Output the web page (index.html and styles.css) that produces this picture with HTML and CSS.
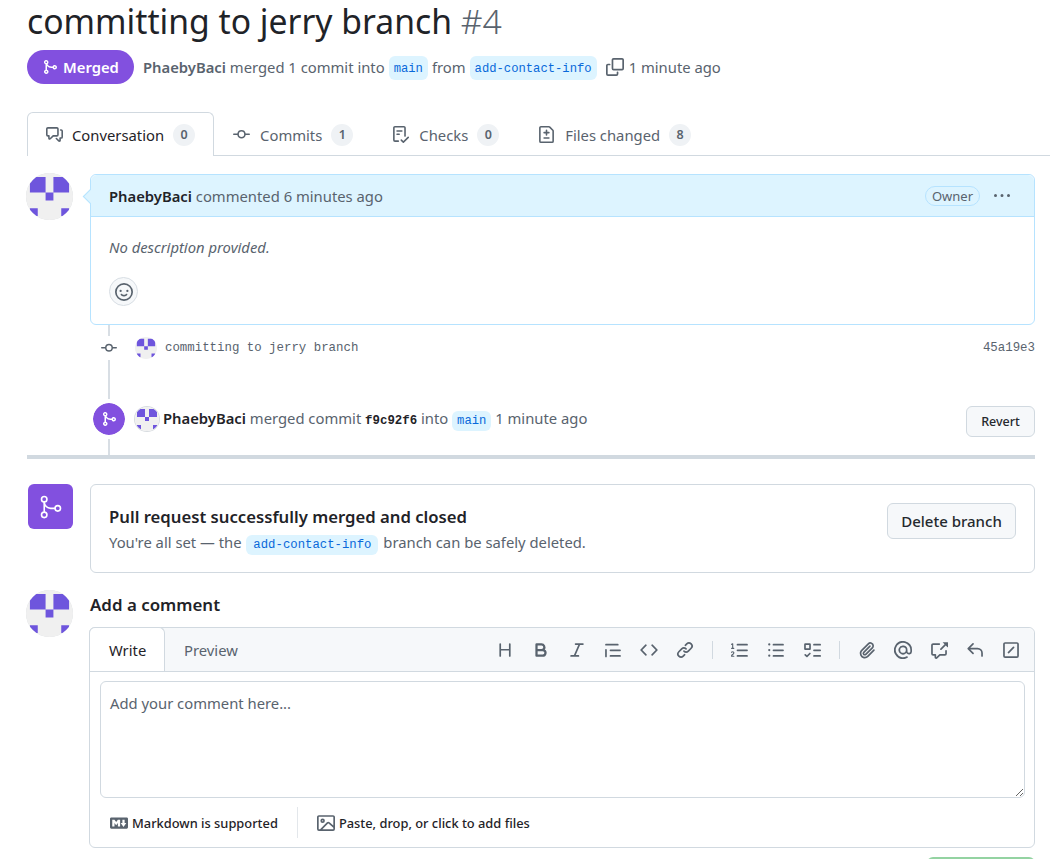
FILE: index.html
```html
<!DOCTYPE html>
<html lang="en">
<head>
    <meta charset="UTF-8">
    <meta name="viewport" content="width=device-width, initial-scale=1.0">
    <title>committing to jerry branch #4</title>
    <link rel="stylesheet" href="styles.css">
</head>
<body>
    <svg class="defs" width="0" height="0" aria-hidden="true">
        <symbol id="i-merge" viewBox="0 0 16 16"><path d="M5.45 5.154A4.25 4.25 0 0 0 9.25 7.5h1.378a2.251 2.251 0 1 1 0 1.5H9.25A5.734 5.734 0 0 1 5 7.123v3.505a2.25 2.25 0 1 1-1.5 0V5.372a2.25 2.25 0 1 1 1.95-.218ZM4.25 13.5a.75.75 0 1 0 0-1.5.75.75 0 0 0 0 1.5Zm8.5-4.5a.75.75 0 1 0 0-1.5.75.75 0 0 0 0 1.5ZM5 3.25a.75.75 0 1 0 0 .005V3.25Z"/></symbol>
        <symbol id="i-commit" viewBox="0 0 16 16"><path d="M11.93 8.5a4.002 4.002 0 0 1-7.86 0H.75a.75.75 0 0 1 0-1.5h3.32a4.002 4.002 0 0 1 7.86 0h3.32a.75.75 0 0 1 0 1.5Zm-1.43-.75a2.5 2.5 0 1 0-5 0 2.5 2.5 0 0 0 5 0Z"/></symbol>
        <symbol id="avatar" viewBox="0 0 420 420">
            <rect width="420" height="420" fill="#f0f0f0"/>
            <path fill="#6e55dd" d="M35 35h140v140H35zM245 35h140v140H245zM175 175h70v70h-70zM35 315h70v70H35zM315 315h70v70h-70z"/>
        </symbol>
    </svg>

    <main class="page">
        <h1 class="title">committing to jerry branch <span class="num">#4</span></h1>

        <div class="state-row">
            <span class="state-badge"><svg class="ico"><use href="#i-merge"/></svg>Merged</span>
            <span class="meta"><b>PhaebyBaci</b> merged 1 commit into</span>
            <code class="ref">main</code>
            <span class="meta">from</span>
            <code class="ref">add-contact-info</code>
            <svg class="ico copy" viewBox="0 0 16 16"><path d="M0 6.75C0 5.784.784 5 1.75 5h1.5a.75.75 0 0 1 0 1.5h-1.5a.25.25 0 0 0-.25.25v7.5c0 .138.112.25.25.25h7.5a.25.25 0 0 0 .25-.25v-1.5a.75.75 0 0 1 1.5 0v1.5A1.75 1.75 0 0 1 9.25 16h-7.5A1.75 1.75 0 0 1 0 14.25Z"/><path d="M5 1.75C5 .784 5.784 0 6.75 0h7.5C15.216 0 16 .784 16 1.75v7.5A1.75 1.75 0 0 1 14.25 11h-7.5A1.75 1.75 0 0 1 5 9.25Zm1.75-.25a.25.25 0 0 0-.25.25v7.5c0 .138.112.25.25.25h7.5a.25.25 0 0 0 .25-.25v-7.5a.25.25 0 0 0-.25-.25Z"/></svg>
            <span class="meta time">1 minute ago</span>
        </div>

        <nav class="tabs">
            <a class="tab active">
                <svg class="ico" viewBox="0 0 16 16"><path d="M1.75 1h8.5c.966 0 1.75.784 1.75 1.75v5.5A1.75 1.75 0 0 1 10.25 10H7.061l-2.574 2.573A1.458 1.458 0 0 1 2 11.543V10h-.25A1.75 1.75 0 0 1 0 8.25v-5.5C0 1.784.784 1 1.75 1ZM1.5 2.75v5.5c0 .138.112.25.25.25h1a.75.75 0 0 1 .75.75v2.19l2.72-2.72a.749.749 0 0 1 .53-.22h3.5a.25.25 0 0 0 .25-.25v-5.5a.25.25 0 0 0-.25-.25h-8.5a.25.25 0 0 0-.25.25Zm13 2a.25.25 0 0 0-.25-.25h-.5a.75.75 0 0 1 0-1.5h.5c.966 0 1.75.784 1.75 1.75v5.5A1.75 1.75 0 0 1 14.25 12H14v1.543a1.458 1.458 0 0 1-2.487 1.03L9.22 12.28a.749.749 0 0 1 .326-1.275.749.749 0 0 1 .734.215l2.22 2.22v-2.19a.75.75 0 0 1 .75-.75h1a.25.25 0 0 0 .25-.25Z"/></svg>
                Conversation <span class="count">0</span>
            </a>
            <a class="tab"><svg class="ico"><use href="#i-commit"/></svg>Commits <span class="count">1</span></a>
            <a class="tab">
                <svg class="ico" viewBox="0 0 16 16"><path d="M2.5 1.75v11.5c0 .138.112.25.25.25h3.17a.75.75 0 0 1 0 1.5H2.75A1.75 1.75 0 0 1 1 13.25V1.75C1 .784 1.784 0 2.75 0h8.5C12.216 0 13 .784 13 1.75v7.736a.75.75 0 0 1-1.5 0V1.75a.25.25 0 0 0-.25-.25h-8.5a.25.25 0 0 0-.25.25Zm13.274 9.537v-.001l-4.557 4.45a.75.75 0 0 1-1.055-.008l-1.943-1.95a.75.75 0 0 1 1.062-1.058l1.419 1.425 4.026-3.932a.75.75 0 1 1 1.048 1.074ZM4.75 4h4.5a.75.75 0 0 1 0 1.5h-4.5a.75.75 0 0 1 0-1.5ZM4 7.75A.75.75 0 0 1 4.75 7h2a.75.75 0 0 1 0 1.5h-2A.75.75 0 0 1 4 7.75Z"/></svg>
                Checks <span class="count">0</span>
            </a>
            <a class="tab">
                <svg class="ico" viewBox="0 0 16 16"><path d="M1 1.75C1 .784 1.784 0 2.75 0h7.586c.464 0 .909.184 1.237.513l2.914 2.914c.329.328.513.773.513 1.237v9.586A1.75 1.75 0 0 1 13.25 16H2.75A1.75 1.75 0 0 1 1 14.25Zm1.75-.25a.25.25 0 0 0-.25.25v12.5c0 .138.112.25.25.25h10.5a.25.25 0 0 0 .25-.25V4.664a.25.25 0 0 0-.073-.177l-2.914-2.914a.25.25 0 0 0-.177-.073ZM8 3.25a.75.75 0 0 1 .75.75v1.5h1.5a.75.75 0 0 1 0 1.5h-1.5v1.5a.75.75 0 0 1-1.5 0V7h-1.5a.75.75 0 0 1 0-1.5h1.5V4A.75.75 0 0 1 8 3.25Zm-3 8a.75.75 0 0 1 .75-.75h4.5a.75.75 0 0 1 0 1.5h-4.5a.75.75 0 0 1-.75-.75Z"/></svg>
                Files changed <span class="count">8</span>
            </a>
        </nav>

        <section class="comment-row">
            <svg class="avatar"><use href="#avatar"/></svg>
            <div class="comment-card">
                <div class="comment-head">
                    <span><b>PhaebyBaci</b> commented 6 minutes ago</span>
                    <span class="owner">Owner</span>
                    <svg class="ico kebab" viewBox="0 0 16 16"><path d="M8 9a1.5 1.5 0 1 0 0-3 1.5 1.5 0 0 0 0 3ZM1.5 9a1.5 1.5 0 1 0 0-3 1.5 1.5 0 0 0 0 3Zm13 0a1.5 1.5 0 1 0 0-3 1.5 1.5 0 0 0 0 3Z"/></svg>
                </div>
                <div class="comment-body">
                    <em>No description provided.</em>
                    <button class="react"><svg class="ico" viewBox="0 0 16 16"><path d="M8 0a8 8 0 1 1 0 16A8 8 0 0 1 8 0ZM1.5 8a6.5 6.5 0 1 0 13 0 6.5 6.5 0 0 0-13 0Zm3.82 1.636a.75.75 0 0 1 1.038.175l.007.009c.103.118.22.222.35.31.264.178.683.37 1.285.37.602 0 1.02-.192 1.285-.371.13-.088.247-.192.35-.31l.007-.008a.75.75 0 0 1 1.222.87l-.022-.015c.02.013.021.015.021.015v.001l-.001.002-.002.003-.005.007-.014.019a2.066 2.066 0 0 1-.184.213c-.16.166-.338.316-.53.445-.63.418-1.37.638-2.127.629-.946 0-1.652-.308-2.126-.63a3.331 3.331 0 0 1-.715-.657l-.014-.02-.005-.006-.002-.003v-.002h-.001l.613-.432-.614.43a.75.75 0 0 1 .183-1.044ZM12 7a1 1 0 1 1-2 0 1 1 0 0 1 2 0ZM5 8a1 1 0 1 1 0-2 1 1 0 0 1 0 2Zm5.25 2.25.592.416a97.71 97.71 0 0 0-.592-.416Z"/></svg></button>
                </div>
            </div>
        </section>

        <section class="timeline">
            <div class="commit-row">
                <span class="node"><svg class="ico"><use href="#i-commit"/></svg></span>
                <svg class="avatar small"><use href="#avatar"/></svg>
                <span class="commit-msg">committing to jerry branch</span>
                <span class="sha">45a19e3</span>
            </div>
            <div class="merged-row">
                <span class="merge-dot"><svg class="ico"><use href="#i-merge"/></svg></span>
                <svg class="avatar small bordered"><use href="#avatar"/></svg>
                <span class="merged-text"><b>PhaebyBaci</b> merged commit <code class="hash">f9c92f6</code> into <code class="ref small-ref">main</code> 1 minute ago</span>
                <button class="btn revert">Revert</button>
            </div>
        </section>
        <div class="thick-rule"></div>

        <section class="merge-row">
            <span class="merge-square">
                <svg class="ico" viewBox="0 0 24 24"><path d="M15 13.25a3.25 3.25 0 1 1 6.5 0 3.25 3.25 0 0 1-6.5 0Zm-12.5 6a3.25 3.25 0 1 1 6.5 0 3.25 3.25 0 0 1-6.5 0Zm0-14.5a3.25 3.25 0 1 1 6.5 0 3.25 3.25 0 0 1-6.5 0ZM5.75 6.5a1.75 1.75 0 1 0-.001-3.501A1.75 1.75 0 0 0 5.75 6.5Zm0 14.5a1.75 1.75 0 1 0-.001-3.501A1.75 1.75 0 0 0 5.75 21Zm12.5-6a1.75 1.75 0 1 0-.001-3.501A1.75 1.75 0 0 0 18.25 15Z"/><path d="M6.5 7.25c0 2.9 2.35 5.25 5.25 5.25h4.5V14h-4.5A6.75 6.75 0 0 1 5 7.25Z"/><path d="M5.75 16.75A.75.75 0 0 1 5 16V8a.75.75 0 0 1 1.5 0v8a.75.75 0 0 1-.75.75Z"/></svg>
            </span>
            <div class="merge-card">
                <div>
                    <h3>Pull request successfully merged and closed</h3>
                    <p>You're all set — the <code class="ref small-ref wide-ref">add-contact-info</code> branch can be safely deleted.</p>
                </div>
                <button class="btn delete">Delete branch</button>
            </div>
        </section>

        <section class="add-row">
            <svg class="avatar"><use href="#avatar"/></svg>
            <div class="add-main">
                <h2>Add a comment</h2>
                <div class="editor">
                    <div class="editor-head">
                        <a class="etab active">Write</a>
                        <a class="etab">Preview</a>
                        <div class="toolbar">
                            <svg class="ico" viewBox="0 0 16 16"><path d="M3.75 2a.75.75 0 0 1 .75.75V7h7V2.75a.75.75 0 0 1 1.5 0v10.5a.75.75 0 0 1-1.5 0V8.5h-7v4.75a.75.75 0 0 1-1.5 0V2.75A.75.75 0 0 1 3.75 2Z"/></svg>
                            <svg class="ico" viewBox="0 0 16 16"><path d="M4 2h4.5a3.501 3.501 0 0 1 2.852 5.53A3.499 3.499 0 0 1 9.5 14H4a1 1 0 0 1-1-1V3a1 1 0 0 1 1-1Zm1 7v3h4.5a1.5 1.5 0 0 0 0-3Zm3.5-2a1.5 1.5 0 0 0 0-3H5v3Z"/></svg>
                            <svg class="ico" viewBox="0 0 16 16"><path d="M6 2.75A.75.75 0 0 1 6.75 2h6.5a.75.75 0 0 1 0 1.5h-2.505l-3.858 9H9.25a.75.75 0 0 1 0 1.5h-6.5a.75.75 0 0 1 0-1.5h2.505l3.858-9H6.75A.75.75 0 0 1 6 2.75Z"/></svg>
                            <svg class="ico" viewBox="0 0 16 16"><path d="M1.75 2.5h10.5a.75.75 0 0 1 0 1.5H1.75a.75.75 0 0 1 0-1.5Zm4 5h8.5a.75.75 0 0 1 0 1.5h-8.5a.75.75 0 0 1 0-1.5Zm0 5h8.5a.75.75 0 0 1 0 1.5h-8.5a.75.75 0 0 1 0-1.5ZM2.5 7.75v6a.75.75 0 0 1-1.5 0v-6a.75.75 0 0 1 1.5 0Z"/></svg>
                            <svg class="ico" viewBox="0 0 16 16"><path d="m11.28 3.22 4.25 4.25a.75.75 0 0 1 0 1.06l-4.25 4.25a.749.749 0 0 1-1.275-.326.749.749 0 0 1 .215-.734L13.94 8l-3.72-3.72a.749.749 0 0 1 .326-1.275.749.749 0 0 1 .734.215Zm-6.56 0a.751.751 0 0 1 1.042.018.751.751 0 0 1 .018 1.042L2.06 8l3.72 3.72a.749.749 0 0 1-.326 1.275.749.749 0 0 1-.734-.215L.47 8.53a.75.75 0 0 1 0-1.06Z"/></svg>
                            <svg class="ico" viewBox="0 0 16 16"><path d="m7.775 3.275 1.25-1.25a3.5 3.5 0 1 1 4.95 4.95l-2.5 2.5a3.5 3.5 0 0 1-4.95 0 .751.751 0 0 1 .018-1.042.751.751 0 0 1 1.042-.018 1.998 1.998 0 0 0 2.83 0l2.5-2.5a2.002 2.002 0 0 0-2.83-2.83l-1.25 1.25a.751.751 0 0 1-1.042-.018.751.751 0 0 1-.018-1.042Zm-4.69 9.64a1.998 1.998 0 0 0 2.83 0l1.25-1.25a.751.751 0 0 1 1.042.018.751.751 0 0 1 .018 1.042l-1.25 1.25a3.5 3.5 0 1 1-4.95-4.95l2.5-2.5a3.5 3.5 0 0 1 4.95 0 .751.751 0 0 1-.018 1.042.751.751 0 0 1-1.042.018 1.998 1.998 0 0 0-2.83 0l-2.5 2.5a1.998 1.998 0 0 0 0 2.83Z"/></svg>
                            <span class="sep"></span>
                            <svg class="ico" viewBox="0 0 16 16"><path d="M5 3.25a.75.75 0 0 1 .75-.75h8.5a.75.75 0 0 1 0 1.5h-8.5A.75.75 0 0 1 5 3.25Zm0 5a.75.75 0 0 1 .75-.75h8.5a.75.75 0 0 1 0 1.5h-8.5A.75.75 0 0 1 5 8.25Zm0 5a.75.75 0 0 1 .75-.75h8.5a.75.75 0 0 1 0 1.5h-8.5a.75.75 0 0 1-.75-.75ZM.924 10.32a.5.5 0 0 1-.851-.525l.001-.001.001-.002.002-.004.007-.011c.097-.144.215-.273.348-.384.228-.19.588-.392 1.068-.392.468 0 .858.181 1.126.484.259.294.377.673.377 1.038 0 .987-.686 1.495-1.156 1.845l-.047.035c-.303.225-.522.4-.654.597h1.357a.5.5 0 0 1 0 1H.5a.5.5 0 0 1-.5-.5c0-1.005.692-1.52 1.167-1.875l.035-.025c.531-.396.8-.625.8-1.078a.57.57 0 0 0-.128-.376C1.806 10.068 1.695 10 1.5 10a.658.658 0 0 0-.429.163.835.835 0 0 0-.144.153ZM2.003 2.5V6h.503a.5.5 0 0 1 0 1H.5a.5.5 0 0 1 0-1h.503V3.308l-.28.14a.5.5 0 0 1-.446-.895l1.003-.5a.5.5 0 0 1 .723.447Z"/></svg>
                            <svg class="ico" viewBox="0 0 16 16"><path d="M5.75 2.5h8.5a.75.75 0 0 1 0 1.5h-8.5a.75.75 0 0 1 0-1.5Zm0 5h8.5a.75.75 0 0 1 0 1.5h-8.5a.75.75 0 0 1 0-1.5Zm0 5h8.5a.75.75 0 0 1 0 1.5h-8.5a.75.75 0 0 1 0-1.5ZM2 14a1 1 0 1 1 0-2 1 1 0 0 1 0 2Zm1-6a1 1 0 1 1-2 0 1 1 0 0 1 2 0ZM2 4a1 1 0 1 1 0-2 1 1 0 0 1 0 2Z"/></svg>
                            <svg class="ico" viewBox="0 0 16 16"><path d="M2 2h4a1 1 0 0 1 1 1v4a1 1 0 0 1-1 1H2a1 1 0 0 1-1-1V3a1 1 0 0 1 1-1Zm4.655 8.595a.75.75 0 0 1 0 1.06L4.03 14.28a.75.75 0 0 1-1.06 0l-1.5-1.5a.749.749 0 0 1 .326-1.275.749.749 0 0 1 .734.215l.97.97 2.095-2.095a.75.75 0 0 1 1.06 0ZM9.75 2.5h5.5a.75.75 0 0 1 0 1.5h-5.5a.75.75 0 0 1 0-1.5Zm0 5h5.5a.75.75 0 0 1 0 1.5h-5.5a.75.75 0 0 1 0-1.5Zm0 5h5.5a.75.75 0 0 1 0 1.5h-5.5a.75.75 0 0 1 0-1.5Zm-7.25-9v3h3v-3Z"/></svg>
                            <span class="sep"></span>
                            <svg class="ico" viewBox="0 0 16 16"><path d="M12.212 3.02a1.753 1.753 0 0 0-2.478.003l-5.83 5.83a3.007 3.007 0 0 0-.88 2.127c0 .795.315 1.551.88 2.116.567.567 1.333.89 2.126.89.79 0 1.548-.321 2.116-.89l5.48-5.48a.75.75 0 0 1 1.061 1.06l-5.48 5.48a4.492 4.492 0 0 1-3.177 1.33c-1.2 0-2.345-.487-3.187-1.33a4.483 4.483 0 0 1-1.32-3.176c0-1.195.475-2.341 1.32-3.186l5.83-5.83a3.25 3.25 0 0 1 5.553 2.297c0 .863-.343 1.691-.953 2.301L7.439 12.39c-.375.377-.884.59-1.416.593a1.998 1.998 0 0 1-1.412-.593 1.992 1.992 0 0 1 0-2.828l5.48-5.48a.751.751 0 0 1 1.042.018.751.751 0 0 1 .018 1.042l-5.48 5.48a.492.492 0 0 0 0 .707.499.499 0 0 0 .352.154.51.51 0 0 0 .356-.154l5.833-5.827a1.755 1.755 0 0 0 0-2.481Z"/></svg>
                            <svg class="ico" viewBox="0 0 16 16"><path d="M4.75 2.37a6.501 6.501 0 0 0 6.5 11.26.75.75 0 0 1 .75 1.298A7.999 7.999 0 0 1 .989 4.148 8 8 0 0 1 16 7.75v1.5a2.75 2.75 0 0 1-5.072 1.475 3.999 3.999 0 0 1-6.65-4.19A4 4 0 0 1 12 8v1.25a1.25 1.25 0 0 0 2.5 0V7.867a6.5 6.5 0 0 0-9.75-5.496ZM10.5 8a2.5 2.5 0 1 0-5 0 2.5 2.5 0 0 0 5 0Z"/></svg>
                            <svg class="ico" viewBox="0 0 16 16"><path d="M2.75 3.5a.25.25 0 0 0-.25.25v7.5c0 .138.112.25.25.25h2a.75.75 0 0 1 .75.75v2.19l2.72-2.72a.749.749 0 0 1 .53-.22h4.5a.25.25 0 0 0 .25-.25v-2.5a.75.75 0 0 1 1.5 0v2.5A1.75 1.75 0 0 1 13.25 13H9.06l-2.573 2.573A1.458 1.458 0 0 1 4 14.543V13H2.75A1.75 1.75 0 0 1 1 11.25v-7.5C1 2.784 1.784 2 2.75 2h5.5a.75.75 0 0 1 0 1.5ZM16 1.25v4.146a.25.25 0 0 1-.427.177L14.03 4.03l-3.75 3.75a.749.749 0 0 1-1.275-.326.749.749 0 0 1 .215-.734l3.75-3.75-1.543-1.543A.25.25 0 0 1 11.604 1h4.146a.25.25 0 0 1 .25.25Z"/></svg>
                            <svg class="ico" viewBox="0 0 16 16"><path d="M6.78 1.97a.75.75 0 0 1 0 1.06L3.81 6h6.44A4.75 4.75 0 0 1 15 10.75v2.5a.75.75 0 0 1-1.5 0v-2.5a3.25 3.25 0 0 0-3.25-3.25H3.81l2.97 2.97a.749.749 0 0 1-.326 1.275.749.749 0 0 1-.734-.215L1.47 7.28a.75.75 0 0 1 0-1.06l4.25-4.25a.75.75 0 0 1 1.06 0Z"/></svg>
                            <svg class="ico" viewBox="0 0 16 16"><path d="M1 2.75C1 1.784 1.784 1 2.75 1h10.5c.966 0 1.75.784 1.75 1.75v10.5A1.75 1.75 0 0 1 13.25 15H2.75A1.75 1.75 0 0 1 1 13.25Zm1.75-.25a.25.25 0 0 0-.25.25v10.5c0 .138.112.25.25.25h10.5a.25.25 0 0 0 .25-.25V2.75a.25.25 0 0 0-.25-.25ZM10.78 5.22a.75.75 0 0 1 0 1.06l-4.5 4.5a.75.75 0 0 1-1.06-1.06l4.5-4.5a.75.75 0 0 1 1.06 0Z"/></svg>
                        </div>
                    </div>
                    <div class="editor-body">
                        <textarea class="input" placeholder="Add your comment here..."></textarea>
                    </div>
                    <div class="editor-foot">
                        <span class="foot-item"><svg class="ico" viewBox="0 0 16 16"><path d="M14.85 3c.63 0 1.15.52 1.14 1.15v7.7c0 .63-.51 1.15-1.15 1.15H1.15C.52 13 0 12.48 0 11.84V4.15C0 3.52.52 3 1.15 3ZM9 11V5H7L5.5 7 4 5H2v6h2V8l1.5 1.92L7 8v3Zm2.99.5L14.5 8H13V5h-2v3H9.5Z"/></svg>Markdown is supported</span>
                        <span class="foot-sep"></span>
                        <span class="foot-item"><svg class="ico" viewBox="0 0 16 16"><path d="M16 13.25A1.75 1.75 0 0 1 14.25 15H1.75A1.75 1.75 0 0 1 0 13.25V2.75C0 1.784.784 1 1.75 1h12.5c.966 0 1.75.784 1.75 1.75ZM1.75 2.5a.25.25 0 0 0-.25.25v10.5c0 .138.112.25.25.25h.94l.03-.03 6.077-6.078a1.75 1.75 0 0 1 2.412-.06L14.5 10.31V2.75a.25.25 0 0 0-.25-.25Zm12.5 11a.25.25 0 0 0 .25-.25v-.917l-4.298-3.889a.25.25 0 0 0-.344.009L4.81 13.5ZM7 6a2 2 0 1 1-3.999.001A2 2 0 0 1 7 6ZM5.5 6a.5.5 0 1 0-1 0 .5.5 0 0 0 1 0Z"/></svg>Paste, drop, or click to add files</span>
                    </div>
                </div>
                <div class="submit-row"><button class="btn-submit" aria-label="Comment"></button></div>
            </div>
        </section>
    </main>
</body>
</html>
```

FILE: styles.css
```css
html, body {
    margin: 0;
    height: 859px;
    overflow: hidden;
}
body {
    font-family: "Noto Sans", "Open Sans", sans-serif;
    font-size: 14.8px;
    color: #1f2328;
    background: #fff;
}
.defs {
    display: block;
    height: 0;
}
.page {
    padding-left: 27px;
    padding-right: 15px;
}
.ico {
    width: 16px;
    height: 16px;
    fill: currentColor;
    flex: none;
}
b {
    font-weight: 600;
}

/* title */
.title {
    margin: 0;
    height: 42px;
    font-size: 33.7px;
    line-height: 42px;
    font-weight: 400;
    color: #1f2328;
}
.title .num {
    color: #59636e;
    font-weight: 300;
}
.state-row {
    display: flex;
    align-items: center;
    margin-top: 8px;
    height: 34px;
}
.state-badge {
    display: flex;
    align-items: center;
    gap: 5px;
    box-sizing: border-box;
    width: 107px;
    height: 34px;
    padding-left: 15px;
    border-radius: 17px;
    background: #8250df;
    color: #fff;
    font-weight: 600;
    margin-right: 9px;
}
.meta {
    color: #59636e;
}
.ref {
    font-family: "Liberation Mono", monospace;
    font-size: 12.2px;
    color: #0969da;
    background: #ddf4ff;
    border-radius: 6px;
    padding: 0 5px;
    height: 24px;
    line-height: 26px;
    margin: 1px 4px 0 4px;
}
.copy {
    width: 18px;
    height: 18px;
    margin-left: 5px;
    margin-right: 5px;
    color: #59636e;
}

/* tabs */
.tabs {
    display: flex;
    margin-top: 28px;
    margin-right: -15px;
    height: 43px;
    border-bottom: 1px solid #d1d9e0;
}
.tab {
    display: flex;
    align-items: center;
    gap: 9px;
    box-sizing: border-box;
    height: 44px;
    padding: 1px 20px 0 19px;
    color: #59636e;
}
.tab .ico {
    width: 17px;
    height: 17px;
    margin-right: 1px;
}
.tab .count {
    display: inline-block;
    min-width: 22px;
    text-align: center;
    line-height: 22px;
    height: 22px;
    background: #eff2f5;
    border-radius: 11px;
    font-size: 12.5px;
    font-weight: 600;
    color: #59636e;
}
.tab.active {
    color: #1f2328;
    border: 1px solid #d1d9e0;
    border-bottom: none;
    border-radius: 6px 6px 0 0;
    background: #fff;
    padding: 0 18px;
}
.tab.active .ico {
    color: #59636e;
    margin-right: 0;
}

/* comment */
.avatar {
    display: block;
    flex: none;
    width: 47px;
    height: 47px;
    border-radius: 50%;
    margin-left: -1px;
    box-shadow: inset 0 0 0 1px #d8dce0;
}
.comment-row {
    display: flex;
    margin-top: 18px;
}
.comment-row .avatar {
    margin-top: -1px;
}
.comment-card {
    position: relative;
    flex: 1;
    margin-left: 17px;
    border: 1px solid #b6e3ff;
    border-radius: 6px;
    height: 151px;
    box-sizing: border-box;
}
.comment-card::before {
    content: "";
    position: absolute;
    left: -6px;
    top: 16px;
    width: 10px;
    height: 10px;
    background: #ddf4ff;
    border-left: 1px solid #b6e3ff;
    border-bottom: 1px solid #b6e3ff;
    transform: rotate(45deg);
}
.comment-head {
    position: relative;
    display: flex;
    align-items: center;
    box-sizing: border-box;
    height: 42px;
    padding: 0 22px 0 18px;
    background: #ddf4ff;
    border-bottom: 1px solid #b6e3ff;
    border-radius: 6px 6px 0 0;
    color: #59636e;
}
.comment-head b {
    color: #1f2328;
}
.owner {
    margin-left: auto;
    margin-right: 12px;
    border: 1px solid #b6e3ff;
    border-radius: 11px;
    font-size: 13px;
    line-height: 18px;
    padding: 0 6px;
}
.kebab {
    width: 20px;
    color: #59636e;
}
.comment-body {
    padding: 20px 18px 0;
}
.comment-body em {
    display: block;
    color: #59636e;
    line-height: 20px;
}
.react {
    display: flex;
    align-items: center;
    justify-content: center;
    width: 29px;
    height: 29px;
    margin-top: 20px;
    padding: 0;
    border: 1px solid #d8dee4;
    border-radius: 50%;
    background: #f6f8fa;
    color: #59636e;
}
.react .ico {
    width: 18px;
    height: 18px;
}

/* timeline */
.timeline {
    margin-left: 81px;
    border-left: 2px solid #d8dee4;
    height: 130px;
}
.commit-row {
    display: flex;
    align-items: center;
    height: 46px;
}
.node {
    display: flex;
    align-items: center;
    justify-content: center;
    width: 18px;
    height: 24px;
    margin-left: -10px;
    background: #fff;
    color: #59636e;
    margin-right: 17px;
}
.avatar.small {
    width: 22px;
    height: 22px;
    margin-left: 0;
    box-shadow: none;
}
.commit-msg {
    margin-left: 8px;
    font-family: "Liberation Mono", monospace;
    font-size: 12.4px;
    color: #59636e;
}
.sha {
    margin-left: auto;
    font-family: "Liberation Mono", monospace;
    font-size: 12.4px;
    color: #59636e;
}
.merged-row {
    display: flex;
    align-items: center;
    margin-top: 32px;
    height: 32px;
}
.merge-dot {
    display: flex;
    align-items: center;
    justify-content: center;
    width: 32px;
    height: 32px;
    margin-left: -17px;
    border-radius: 50%;
    background: #8250df;
    color: #fff;
    outline: 4px solid #fff;
}
.avatar.small.bordered {
    width: 24px;
    height: 24px;
    margin-left: 10px;
    box-shadow: 0 0 0 1px #d8dce0;
}
.merged-text {
    margin-left: 4px;
    color: #59636e;
}
.merged-text b {
    color: #1f2328;
}
.hash {
    font-family: "Liberation Mono", monospace;
    font-size: 12.4px;
    font-weight: 600;
    color: #1f2328;
}
.small-ref {
    display: inline-block;
    height: 20px;
    line-height: 20px;
    margin: 0;
}
.wide-ref {
    font-size: 12.3px;
    padding: 0 7px;
    margin: 0 1px;
}
.btn {
    font-family: inherit;
    font-weight: 500;
    color: #25292e;
    background: #f6f8fa;
    border: 1px solid #d1d9e0;
    border-radius: 6px;
}
.revert {
    margin-left: auto;
    width: 69px;
    height: 31px;
    margin-top: 5px;
    font-size: 12.5px;
}
.thick-rule {
    height: 4px;
    background: #d1d9e0;
}

/* merge box */
.merge-row {
    display: flex;
    margin-top: 25px;
}
.merge-square {
    display: flex;
    align-items: center;
    justify-content: center;
    flex: none;
    width: 45px;
    height: 45px;
    margin-left: 1px;
    border-radius: 6px;
    background: #8250df;
    color: #fff;
}
.merge-square .ico {
    width: 26px;
    height: 26px;
}
.merge-card {
    display: flex;
    align-items: center;
    justify-content: space-between;
    box-sizing: border-box;
    flex: 1;
    height: 89px;
    margin-left: 17px;
    padding: 0 18px;
    border: 1px solid #d1d9e0;
    border-radius: 6px;
}
.merge-card h3 {
    margin: 3px 0 0;
    font-size: 16.7px;
    line-height: 24px;
    font-weight: 600;
}
.merge-card p {
    margin: 1px 0 0;
    color: #59636e;
    line-height: 24px;
}
.delete {
    width: 129px;
    height: 36px;
    margin-bottom: 16px;
    font-size: 15px;
}

/* add comment */
.add-row {
    display: flex;
    margin-top: 17px;
}
.add-main {
    flex: 1;
    margin-left: 16px;
    min-width: 0;
}
.add-main h2 {
    margin: 0;
    font-size: 16.9px;
    line-height: 30px;
    font-weight: 600;
    padding-left: 1px;
}
.editor {
    box-sizing: border-box;
    height: 221px;
    margin-top: 7px;
    border: 1px solid #d1d9e0;
    border-radius: 6px;
}
.editor-head {
    display: flex;
    align-items: stretch;
    height: 44px;
    box-sizing: border-box;
    background: #f6f8fa;
    border-bottom: 1px solid #d1d9e0;
    border-radius: 6px 6px 0 0;
}
.etab {
    display: flex;
    align-items: center;
    padding: 0 19px;
    color: #59636e;
}
.etab.active {
    width: 76px;
    box-sizing: border-box;
    margin-left: -1px;
    margin-top: -1px;
    height: 44px;
    color: #1f2328;
    background: #fff;
    border: 1px solid #d1d9e0;
    border-bottom: none;
    border-radius: 6px 6px 0 0;
}
.toolbar {
    display: flex;
    align-items: center;
    gap: 18px;
    margin-left: auto;
    padding-right: 14px;
    color: #59636e;
}
.toolbar .ico {
    width: 18px;
    height: 18px;
}
.sep {
    width: 1px;
    height: 18px;
    background: #d1d9e0;
}
.editor-body {
    padding: 9px 9px 0 10px;
}
.input {
    display: block;
    box-sizing: border-box;
    width: 100%;
    height: 117px;
    padding: 11px 9px;
    border: 1px solid #d1d9e0;
    border-radius: 6px;
    font-family: inherit;
    font-size: 14.8px;
    outline: none;
}
.input::placeholder {
    color: #59636e;
}
.editor-foot {
    display: flex;
    align-items: center;
    height: 49px;
    padding-left: 20px;
    font-size: 12.85px;
    font-weight: 500;
    color: #1f2328;
}
.foot-item {
    display: flex;
    align-items: center;
    gap: 4px;
}
.foot-item .ico {
    width: 18px;
    height: 18px;
    color: #59636e;
}
.foot-sep {
    width: 1px;
    height: 31px;
    margin: 0 19px;
    background: #e3e7eb;
}
.submit-row {
    display: flex;
    justify-content: flex-end;
    margin-top: 9px;
}
.btn-submit {
    width: 108px;
    height: 32px;
    border: none;
    border-radius: 6px;
    background: #94d3a2;
}
```
